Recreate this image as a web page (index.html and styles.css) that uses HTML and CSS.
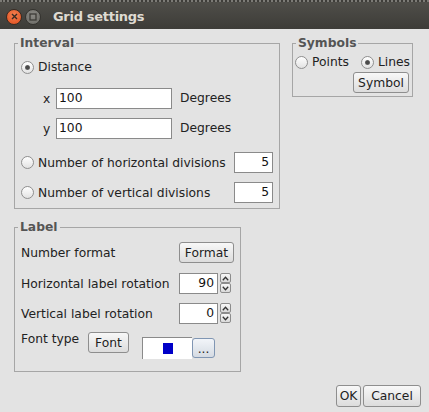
FILE: index.html
```html
<!DOCTYPE html>
<html>
<head>
<meta charset="utf-8">
<link rel="stylesheet" href="styles.css">
</head>
<body>
<div class="window">
  <div class="titlebar">
    <span class="wbtn close"><svg width="7" height="7" viewBox="0 0 7 7"><path d="M1 1L6 6M6 1L1 6" stroke="#3a2a22" stroke-width="1.4"/></svg></span>
    <span class="wbtn mini"><svg width="8" height="8" viewBox="0 0 8 8"><rect x="1" y="1" width="6" height="6" fill="none" stroke="#3c3b37" stroke-width="1.3"/></svg></span>
    <span class="title">Grid settings</span>
  </div>
  <div class="main">
    <div class="leftcol">
      <div class="group interval">
        <span class="legend">Interval</span>
        <div class="row r-dist">
          <span class="radio on"></span><span class="rtext">Distance</span>
        </div>
        <div class="row r-x">
          <span class="axis">x</span><span class="field wide">100</span><span class="unit">Degrees</span>
        </div>
        <div class="row r-y">
          <span class="axis">y</span><span class="field wide">100</span><span class="unit">Degrees</span>
        </div>
        <div class="row r-div first">
          <span class="opt"><span class="radio"></span><span class="rtext">Number of horizontal divisions</span></span>
          <span class="field num">5</span>
        </div>
        <div class="row r-div">
          <span class="opt"><span class="radio"></span><span class="rtext">Number of vertical divisions</span></span>
          <span class="field num">5</span>
        </div>
      </div>
      <div class="group label">
        <span class="legend">Label</span>
        <div class="row l-fmt">
          <span class="ltext">Number format</span><span class="btn fmt">Format</span>
        </div>
        <div class="row l-rot first">
          <span class="ltext">Horizontal label rotation</span><span class="field num">90</span>
          <span class="spinner"><span class="sbtn"><svg width="7" height="5" viewBox="0 0 7 5"><path d="M0.8 4.2L3.5 1.2L6.2 4.2" fill="none" stroke="#333" stroke-width="1.3"/></svg></span><span class="sbtn"><svg width="7" height="5" viewBox="0 0 7 5"><path d="M0.8 0.8L3.5 3.8L6.2 0.8" fill="none" stroke="#333" stroke-width="1.3"/></svg></span></span>
        </div>
        <div class="row l-rot">
          <span class="ltext">Vertical label rotation</span><span class="field num">0</span>
          <span class="spinner"><span class="sbtn"><svg width="7" height="5" viewBox="0 0 7 5"><path d="M0.8 4.2L3.5 1.2L6.2 4.2" fill="none" stroke="#333" stroke-width="1.3"/></svg></span><span class="sbtn"><svg width="7" height="5" viewBox="0 0 7 5"><path d="M0.8 0.8L3.5 3.8L6.2 0.8" fill="none" stroke="#333" stroke-width="1.3"/></svg></span></span>
        </div>
        <div class="row l-font">
          <span class="ltext ftext">Font type</span><span class="btn fontbtn">Font</span>
          <span class="colorbox"><span class="swatch"></span></span><span class="btn dots">...</span>
        </div>
      </div>
    </div>
    <div class="group symbols">
      <span class="legend">Symbols</span>
      <div class="row s-opts">
        <span class="radio"></span><span class="rtext pts">Points</span>
        <span class="radio on"></span><span class="rtext">Lines</span>
      </div>
      <span class="btn symbtn">Symbol</span>
    </div>
  </div>
  <div class="footer">
    <span class="btn ok">OK</span><span class="btn cancel">Cancel</span>
  </div>
</div>
</body>
</html>
```
FILE: styles.css
```css
html, body {
  margin: 0;
  padding: 0;
}
body {
  background: #e3e3e3;
  font-family: "DejaVu Sans", sans-serif;
  font-size: 12.3px;
  color: #222;
}
.window {
  width: 429px;
  height: 412px;
  background: #e3e3e3;
  overflow: hidden;
}
.titlebar {
  height: 29px;
  box-sizing: border-box;
  border-top: 2px dotted #7c7b76;
  background: linear-gradient(#4f4e49, #3d3c38);
  display: flex;
  align-items: center;
  padding-left: 6px;
}
.wbtn {
  width: 16px;
  height: 16px;
  border-radius: 50%;
  box-sizing: border-box;
  display: flex;
  align-items: center;
  justify-content: center;
  margin-top: 2px;
}
.close {
  background: radial-gradient(circle at 50% 35%, #f5804f, #df4c1c);
  border: 1px solid #3a2b22;
}
.mini {
  margin-left: 3px;
  background: radial-gradient(circle at 50% 35%, #8a8984, #6a6964);
  border: 1px solid #34332f;
}
.title {
  margin-left: 12px;
  margin-top: 2px;
  font-family: "DejaVu Sans", sans-serif;
  font-weight: bold;
  font-size: 13px;
  letter-spacing: -0.3px;
  color: #dfdbd2;
}
.main {
  display: flex;
  align-items: flex-start;
  padding: 14px 0 0 14px;
}
.leftcol {
  display: flex;
  flex-direction: column;
}
.group {
  position: relative;
  border: 1px solid #a6a6a6;
  display: flex;
  flex-direction: column;
}
.legend {
  position: absolute;
  top: -8px;
  left: 3px;
  padding: 0 2px;
  background: #e3e3e3;
  font-weight: bold;
  color: #555;
  line-height: 14px;
}
.row {
  display: flex;
  align-items: center;
}
.interval {
  padding: 0 6px 5px 6px;
  width: 252px;
}
.r-dist {
  height: 20px;
  margin-top: 13px;
}
.r-x {
  margin-top: 11px;
  padding-left: 22px;
}
.r-y {
  margin-top: 9px;
  padding-left: 22px;
}
.r-div {
  justify-content: space-between;
  margin-top: 9px;
}
.r-div.first {
  margin-top: 13px;
}
.opt {
  display: flex;
  align-items: center;
}
.radio {
  width: 13px;
  height: 13px;
  box-sizing: border-box;
  border-radius: 50%;
  border: 1px solid #8f8f8f;
  background: linear-gradient(#ffffff, #e2e2e2);
  position: relative;
  flex: none;
}
.radio.on::after {
  content: "";
  position: absolute;
  left: 3px;
  top: 3px;
  width: 5px;
  height: 5px;
  border-radius: 50%;
  background: radial-gradient(circle, #4a4a4a 40%, #8a8a8a 100%);
}
.rtext {
  margin-left: 4px;
  line-height: 14px;
}
.axis {
  width: 13px;
}
.field {
  height: 21px;
  box-sizing: border-box;
  border: 1px solid #8a8a8a;
  background: #fff;
  line-height: 19px;
  padding: 0 2px;
  color: #111;
}
.wide {
  width: 116px;
}
.num {
  width: 39px;
  text-align: right;
  padding-right: 3px;
}
.unit {
  margin-left: 8px;
  margin-top: -2px;
}
.label {
  margin-top: 18px;
  width: 213px;
  padding: 0 6px 12px 6px;
}
.ltext {
  line-height: 14px;
}
.l-fmt {
  margin-top: 14px;
}
.l-fmt .ltext {
  width: 159px;
}
.l-rot {
  margin-top: 9px;
}
.l-rot.first {
  margin-top: 10px;
}
.l-rot .ltext {
  width: 158px;
}
.spinner {
  display: flex;
  flex-direction: column;
  margin-left: 2px;
  margin-top: -1px;
}
.sbtn {
  width: 11px;
  height: 10px;
  box-sizing: border-box;
  border: 1px solid #8c8c8c;
  border-radius: 2px;
  background: linear-gradient(#f8f8f8, #d9d9d9);
  display: flex;
  align-items: center;
  justify-content: center;
}
.l-font {
  margin-top: 8px;
  align-items: flex-start;
  height: 27px;
}
.ftext {
  width: 67px;
}
.btn {
  height: 21px;
  box-sizing: border-box;
  border: 1px solid #8e8e8e;
  border-radius: 3px;
  background: linear-gradient(#f8f8f8, #dcdcdc);
  display: flex;
  align-items: center;
  justify-content: center;
  color: #1e1e1e;
  flex: none;
}
.fmt {
  width: 55px;
  margin-left: 1px;
}
.fontbtn {
  width: 41px;
}
.colorbox {
  margin-left: 13px;
  margin-top: 5px;
  width: 50px;
  height: 22px;
  box-sizing: border-box;
  background: #fff;
  border-top: 1px solid #8a8a8a;
  border-left: 1px solid #8a8a8a;
  display: flex;
  align-items: center;
  justify-content: center;
}
.swatch {
  width: 10px;
  height: 11px;
  background: #0000c8;
  margin-top: -1px;
}
.dots {
  width: 23px;
  height: 20px;
  margin-top: 6px;
  border-color: #8096b3;
  background: linear-gradient(#f2f5f9, #d5dbe3);
  align-items: flex-end;
  padding-bottom: 3px;
  line-height: 10px;
}
.symbols {
  margin-left: 12px;
  width: 114px;
  padding: 0 3px 3px 2px;
}
.s-opts {
  height: 20px;
  margin-top: 8px;
}
.pts {
  margin-right: 12px;
}
.symbtn {
  align-self: flex-end;
  width: 56px;
}
.footer {
  display: flex;
  justify-content: flex-end;
  gap: 2px;
  margin-top: 13px;
  padding-right: 8px;
}
.ok {
  width: 25px;
  height: 22px;
}
.cancel {
  width: 58px;
  height: 22px;
}
```
